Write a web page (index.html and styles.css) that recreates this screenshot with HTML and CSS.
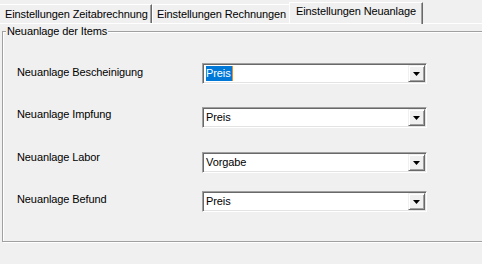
FILE: index.html
```html
<!DOCTYPE html>
<html>
  <head>
    <title>Einstellungen</title>
    <link rel="stylesheet" href="styles.css">
  </head>
  <body>
    <div class="tabs">
      <div class="tab tab-first">Einstellungen Zeitabrechnung</div>
      <div class="tab tab-second">Einstellungen Rechnungen</div>
      <div class="tab tab-active">Einstellungen Neuanlage</div>
    </div>
    <div class="page">
      <div class="group">
        <span class="group-title">Neuanlage der Items</span>
        <div class="row row-1">
          <span class="label">Neuanlage Bescheinigung</span>
          <div class="combo">
            <span class="value"><span class="selected">Preis</span></span>
            <span class="drop"><svg width="7" height="4" viewBox="0 0 7 4"><polygon points="0,0 7,0 3.5,4" fill="#000"/></svg></span>
          </div>
        </div>
        <div class="row row-2">
          <span class="label">Neuanlage Impfung</span>
          <div class="combo">
            <span class="value">Preis</span>
            <span class="drop"><svg width="7" height="4" viewBox="0 0 7 4"><polygon points="0,0 7,0 3.5,4" fill="#000"/></svg></span>
          </div>
        </div>
        <div class="row row-3">
          <span class="label">Neuanlage Labor</span>
          <div class="combo">
            <span class="value">Vorgabe</span>
            <span class="drop"><svg width="7" height="4" viewBox="0 0 7 4"><polygon points="0,0 7,0 3.5,4" fill="#000"/></svg></span>
          </div>
        </div>
        <div class="row row-4">
          <span class="label">Neuanlage Befund</span>
          <div class="combo">
            <span class="value">Preis</span>
            <span class="drop"><svg width="7" height="4" viewBox="0 0 7 4"><polygon points="0,0 7,0 3.5,4" fill="#000"/></svg></span>
          </div>
        </div>
      </div>
    </div>
  </body>
</html>
```

FILE: styles.css
```css
* {
  box-sizing: border-box;
}
html, body {
  width: 482px;
  height: 264px;
}
body {
  margin: 0;
  overflow: hidden;
  background: #f0f0f0;
  color: #000;
  font-family: "Liberation Sans", Arial, sans-serif;
  font-size: 11px;
  line-height: 13px;
  letter-spacing: -0.1px;
}
.tabs {
  display: flex;
  align-items: flex-end;
  height: 24px;
  border-bottom: 1px solid #fff;
}
.tab {
  height: 19px;
  padding-top: 3px;
  border-top: 1px solid #fff;
  white-space: nowrap;
}
.tab-first {
  width: 152px;
  padding-left: 5px;
  border-right: 1px solid #696969;
  box-shadow: inset -1px 0 0 #a0a0a0;
}
.tab-second {
  width: 137px;
  padding-left: 4px;
  border-left: 1px solid #fff;
}
.tab-active {
  width: 134px;
  height: 22px;
  margin-bottom: -1px;
  padding-top: 2px;
  padding-left: 6px;
  border-left: 1px solid #fff;
  border-right: 1px solid #696969;
  box-shadow: inset -1px 0 0 #a0a0a0;
}
.page {
  padding: 7px 0 0 2px;
}
.group {
  position: relative;
  width: 500px;
  height: 211px;
  padding: 31px 0 0 14px;
  border: 1px solid #a0a0a0;
  box-shadow: inset 1px 1px 0 #fff, 1px 1px 0 #fff;
}
.group-title {
  position: absolute;
  top: -7px;
  left: 3px;
  padding: 0 1px;
  background: #f0f0f0;
}
.row {
  display: flex;
  align-items: flex-start;
}
.row-1 { height: 44px; }
.row-2 { height: 45px; }
.row-3 { height: 39px; }
.label {
  width: 185px;
}
.row-1 .label { margin-top: 3px; }
.row-2 .label { margin-top: 1px; }
.row-3 .label { margin-top: -1px; }
.row-4 .label { margin-top: 2px; }
.combo {
  display: flex;
  width: 225px;
  height: 21px;
  background: #fff;
  border-top: 1px solid #a0a0a0;
  border-left: 1px solid #a0a0a0;
  border-right: 1px solid #fff;
  border-bottom: 1px solid #fff;
  box-shadow: inset 1px 1px 0 #696969, inset -1px -1px 0 #e3e3e3;
}
.value {
  flex: 1;
  padding: 2px 0 0 3px;
  line-height: 15px;
}
.selected {
  display: inline-block;
  height: 15px;
  padding-right: 1px;
  background: #0078d7;
  color: #fff;
  border-right: 1px solid #f08c28;
}
.drop {
  display: flex;
  align-items: center;
  justify-content: center;
  width: 17px;
  height: 17px;
  margin: 1px 1px 1px 0;
  background: #f0f0f0;
  border-top: 1px solid #f0f0f0;
  border-left: 1px solid #f0f0f0;
  border-right: 1px solid #696969;
  border-bottom: 1px solid #696969;
  box-shadow: inset 1px 1px 0 #fff, inset -1px -1px 0 #a0a0a0;
}
.drop svg {
  display: block;
  margin-top: 1px;
}
```
